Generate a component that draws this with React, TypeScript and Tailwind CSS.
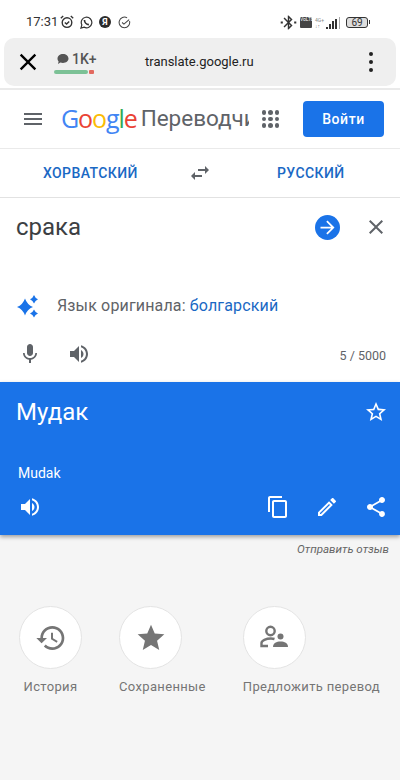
import React from 'react'

const Icon = ({ d, className }: { d: string; className: string }) => (
  <svg viewBox="0 0 24 24" className={className} fill="currentColor">
    <path d={d} />
  </svg>
)

const paths = {
  menu: 'M3 18h18v-2H3v2zm0-5h18v-2H3v2zm0-7v2h18V6H3z',
  swap: 'M6.99 11L3 15l3.99 4v-3H14v-2H6.99v-3zM21 9l-3.99-4v3H10v2h7.01v3L21 9z',
  arrow: 'M12 4l-1.41 1.41L16.17 11H4v2h12.17l-5.58 5.59L12 20l8-8z',
  close: 'M19 6.41L17.59 5 12 10.59 6.41 5 5 6.41 10.59 12 5 17.59 6.41 19 12 13.41 17.59 19 19 17.59 13.41 12z',
  mic: 'M12 14c1.66 0 2.99-1.34 2.99-3L15 5c0-1.66-1.34-3-3-3S9 3.34 9 5v6c0 1.66 1.34 3 3 3zm5.3-3c0 3-2.54 5.1-5.3 5.1S6.7 14 6.7 11H5c0 3.41 2.72 6.23 6 6.72V21h2v-3.28c3.28-.48 6-3.3 6-6.72h-1.7z',
  volume: 'M3 9v6h4l5 5V4L7 9H3zm13.5 3c0-1.77-1.02-3.29-2.5-4.03v8.05c1.48-.73 2.5-2.25 2.5-4.02zM14 3.23v2.06c2.89.86 5 3.54 5 6.71s-2.11 5.85-5 6.71v2.06c4.01-.91 7-4.49 7-8.77 0-4.28-2.99-7.86-7-8.77z',
  starBorder: 'M22 9.24l-7.19-.62L12 2 9.19 8.63 2 9.24l5.46 4.73L5.82 21 12 17.27 18.18 21l-1.63-7.03L22 9.24zM12 15.4l-3.76 2.27 1-4.28-3.32-2.88 4.38-.38L12 6.1l1.71 4.04 4.38.38-3.32 2.88 1 4.28L12 15.4z',
  star: 'M12 17.27L18.18 21l-1.64-7.03L22 9.24l-7.19-.61L12 2 9.19 8.63 2 9.24l5.46 4.73L5.82 21z',
  copy: 'M16 1H4c-1.1 0-2 .9-2 2v14h2V3h12V1zm3 4H8c-1.1 0-2 .9-2 2v14c0 1.1.9 2 2 2h11c1.1 0 2-.9 2-2V7c0-1.1-.9-2-2-2zm0 16H8V7h11v14z',
  edit: 'M14.06 9.02l.92.92L5.92 19H5v-.92l9.06-9.06M17.66 3c-.25 0-.51.1-.7.29l-1.83 1.83 3.75 3.75 1.83-1.83c.39-.39.39-1.02 0-1.41l-2.34-2.34c-.2-.2-.45-.29-.71-.29zm-3.6 3.19L3 17.25V21h3.75L17.81 9.94l-3.75-3.75z',
  share: 'M18 16.08c-.76 0-1.44.3-1.96.77L8.91 12.7c.05-.23.09-.46.09-.7s-.04-.47-.09-.7l7.05-4.11c.54.5 1.25.81 2.04.81 1.66 0 3-1.34 3-3s-1.34-3-3-3-3 1.34-3 3c0 .24.04.47.09.7L8.04 9.81C7.5 9.31 6.79 9 6 9c-1.66 0-3 1.34-3 3s1.34 3 3 3c.79 0 1.5-.31 2.04-.81l7.12 4.16c-.05.21-.08.43-.08.65 0 1.61 1.31 2.92 2.92 2.92 1.61 0 2.92-1.31 2.92-2.92s-1.31-2.92-2.92-2.92z',
  history: 'M13 3c-4.97 0-9 4.03-9 9H1l3.89 3.89.07.14L9 12H6c0-3.87 3.13-7 7-7s7 3.13 7 7-3.13 7-7 7c-1.93 0-3.68-.79-4.94-2.06l-1.42 1.42C8.27 19.99 10.51 21 13 21c4.97 0 9-4.03 9-9s-4.03-9-9-9zm-1 5v5l4.28 2.54.72-1.21-3.5-2.08V8H12z',
  bluetooth: 'M17.71 7.71L12 2h-1v7.59L6.41 5 5 6.41 10.59 12 5 17.59 6.41 19 11 14.41V22h1l5.71-5.71-4.3-4.29 4.3-4.29zM13 5.83l1.88 1.88L13 9.59V5.83zm1.88 10.46L13 18.17v-3.76l1.88 1.88zM1 10.5h3v3H1zM20 10.5h3v3h-3z',
}

function StatusBar() {
  return (
    <div className="h-[38px] bg-white flex items-end pb-[5px] pl-[26px] pr-[30px] text-[#333]">
      <span className="text-[13px] leading-[22px] w-[33px]">17:31</span>
      <div className="flex items-center gap-[6px] h-[22px] ml-[1px]">
        {/* alarm */}
        <svg viewBox="0 0 14 14" className="w-[14px] h-[14px]" fill="none" stroke="#333" strokeWidth="1.4">
          <circle cx="7" cy="7.6" r="4.8" />
          <path d="M4.8 7.4 L6.6 9 L9.2 6.4" />
          <path d="M0.8 3.2 L3.2 1 M13.2 3.2 L10.8 1" />
        </svg>
        {/* whatsapp */}
        <svg viewBox="0 0 14 14" className="w-[13px] h-[13px]" fill="none" stroke="#333" strokeWidth="1.3">
          <path d="M1 13 L2 9.6 A5.7 5.7 0 1 1 4.4 12 Z" />
          <path d="M4.8 4.4 C4.8 7 7 9.2 9.6 9.2" strokeWidth="1.8" />
        </svg>
        {/* yandex */}
        <span className="w-[12px] h-[12px] rounded-full bg-[#2b2b2b] text-white text-[9px] leading-[12px] text-center font-bold">Я</span>
        {/* check */}
        <svg viewBox="0 0 14 14" className="w-[13px] h-[13px] ml-[1px]" fill="none" stroke="#444" strokeWidth="1.1">
          <path d="M12.4 5.4 A5.7 5.7 0 1 1 9.8 2" />
          <path d="M4.4 7 L6.4 8.8 L12 3.8" />
        </svg>
      </div>
      <div className="ml-auto flex items-center h-[22px]">
        <Icon d={paths.bluetooth} className="w-[17px] h-[17px] text-[#333]" />
        <span className="ml-[3px] w-[12px] h-[11px] rounded-[1px] bg-[#444] text-white text-[5px] leading-[5.5px] text-center">VoLTE</span>
        {/* signal */}
        <div className="ml-[3px] flex items-end gap-[1px] h-[13px]">
          <div className="flex flex-col text-[5px] leading-[6px] text-[#888] mr-[1px]">
            <span>4G+</span>
            <span>↓↑</span>
          </div>
          <div className="w-[2px] h-[2px] bg-[#333]" />
          <div className="w-[2px] h-[5px] bg-[#333]" />
          <div className="w-[2px] h-[8px] bg-[#333]" />
          <div className="w-[2px] h-[10px] bg-[#333]" />
          <div className="w-[1px] h-[12px] ml-[1px] bg-[#aaa]" />
        </div>
        <div className="ml-[6px] flex items-center">
          <div className="w-[22px] h-[11px] border border-[#333] rounded-[3px] text-[10px] leading-[9px] text-center text-[#333] bg-[#ddd]">69</div>
          <div className="w-[1px] h-[4px] ml-[1px] bg-[#333]" />
        </div>
      </div>
    </div>
  )
}

function BrowserBar() {
  return (
    <div className="bg-white px-[4px] pb-[2px]">
      <div className="h-[48px] rounded-[10px] bg-[#efefef] flex items-center">
        <Icon d={paths.close} className="w-[28px] h-[28px] ml-[10px] text-black" />
        <div className="ml-[12px] w-[44px] flex flex-col items-start">
          <div className="flex items-center h-[18px] ml-[3px]">
            <svg viewBox="0 0 12 12" className="w-[12px] h-[12px]" fill="#555">
              <path d="M6 1 C9 1 11.5 3 11.5 5.6 C11.5 8.2 9 10 6 10 C5 10 4.2 9.9 3.4 9.6 L1 11 L1.6 8.4 C0.8 7.6 0.5 6.6 0.5 5.6 C0.5 3 3 1 6 1 Z" />
            </svg>
            <span className="ml-[3px] text-[14px] leading-[18px] text-[#555] font-medium whitespace-nowrap">1K+</span>
          </div>
          <div className="flex items-center gap-[1px] mt-[2px]">
            <div className="w-[34px] h-[4px] rounded-full bg-[#7cc196]" />
            <div className="w-[5px] h-[4px] rounded-[1px] bg-[#e2695f]" />
          </div>
        </div>
        <span className="ml-[47px] text-[13px] text-[#222]">translate.google.ru</span>
        <div className="ml-auto mr-[23px] flex flex-col gap-[4px]">
          <div className="w-[4px] h-[4px] rounded-full bg-[#222]" />
          <div className="w-[4px] h-[4px] rounded-full bg-[#222]" />
          <div className="w-[4px] h-[4px] rounded-full bg-[#222]" />
        </div>
      </div>
    </div>
  )
}

function Header() {
  return (
    <div className="h-[61px] bg-white border-t-2 border-[#eaeaea] border-b flex items-center">
      <Icon d={paths.menu} className="w-[24px] h-[24px] ml-[21px] text-[#5f6368]" />
      <div className="ml-[16px] w-[188px] overflow-hidden whitespace-nowrap flex items-center text-[25px] font-[Open_Sans]">
        <span className="tracking-[-1.1px]">
          <span className="text-[#4285f4]">G</span>
          <span className="text-[#ea4335]">o</span>
          <span className="text-[#fbbc05]">o</span>
          <span className="text-[#4285f4]">g</span>
          <span className="text-[#34a853]">l</span>
          <span className="text-[#ea4335]">e</span>
        </span>
        <span className="ml-[4px] text-[#5f6368] text-[22.5px] font-[Roboto]">Переводчик</span>
      </div>
      <div className="ml-[13px] grid grid-cols-3 gap-[2px] w-[17px]">
        {Array.from({ length: 9 }).map((_, i) => (
          <div key={i} className="w-[4.4px] h-[4.4px] rounded-full bg-[#5f6368]" />
        ))}
      </div>
      <button className="ml-[24px] w-[81px] h-[36px] rounded-[4px] bg-[#1a73e8] text-white text-[14px] font-medium tracking-[0.6px]">
        Войти
      </button>
    </div>
  )
}

function LangRow() {
  return (
    <div className="h-[49px] bg-white border-b border-[#e2e2e2] flex items-center text-[14px] font-medium text-[#1a68c4] tracking-[0.4px]">
      <span className="ml-[43px] w-[145px]">ХОРВАТСКИЙ</span>
      <Icon d={paths.swap} className="w-[24px] h-[24px] text-[#5f6368]" />
      <span className="ml-[65px]">РУССКИЙ</span>
    </div>
  )
}

function InputCard() {
  return (
    <div className="h-[184px] bg-white flex flex-col">
      <div className="h-[58px] flex items-center">
        <span className="ml-[16px] text-[24px] text-[#3c4043]">срака</span>
        <div className="ml-auto w-[25px] h-[25px] rounded-full bg-[#1a73e8] flex items-center justify-center">
          <Icon d={paths.arrow} className="w-[21px] h-[21px] text-white" />
        </div>
        <Icon d={paths.close} className="w-[24px] h-[24px] ml-[24px] mr-[12px] text-[#5f6368]" />
      </div>
      <div className="mt-[30px] h-[40px] flex items-center">
        <svg viewBox="0 0 24 24" className="w-[24px] h-[24px] ml-[16px]" fill="#1a73e8">
          <path d="M9 4.5 Q11.2 10.8 17 13 Q11.2 15.2 9 21.5 Q6.8 15.2 1 13 Q6.8 10.8 9 4.5 Z" />
          <path d="M18 1 Q19.2 4.2 22 5.3 Q19.2 6.4 18 9.6 Q16.8 6.4 14 5.3 Q16.8 4.2 18 1 Z" />
          <path d="M18 15.5 Q19.2 18.4 22 19.5 Q19.2 20.6 18 23.5 Q16.8 20.6 14 19.5 Q16.8 18.4 18 15.5 Z" />
        </svg>
        <span className="ml-[17px] text-[16px] text-[#5f6368] tracking-[0.15px]">
          Язык оригинала: <span className="text-[#1a68c4]">болгарский</span>
        </span>
      </div>
      <div className="mt-[8px] h-[40px] flex items-center">
        <Icon d={paths.mic} className="w-[24px] h-[24px] ml-[18px] text-[#5f6368]" />
        <Icon d={paths.volume} className="w-[24px] h-[24px] ml-[25px] text-[#5f6368]" />
        <span className="ml-auto mr-[14px] mt-[4px] text-[12.5px] text-[#5f6368]">5 / 5000</span>
      </div>
    </div>
  )
}

function ResultCard() {
  return (
    <div className="h-[153px] bg-[#1a73e8] text-white flex flex-col shadow-[0_2px_4px_rgba(0,0,0,0.35)]">
      <div className="h-[60px] flex items-center">
        <span className="ml-[16px] text-[24px]">Мудак</span>
        <Icon d={paths.starBorder} className="w-[24px] h-[24px] ml-auto mr-[12px]" />
      </div>
      <span className="ml-[18px] mt-[21px] text-[14px] leading-[20px]">Mudak</span>
      <div className="mt-[4px] h-[40px] flex items-center">
        <Icon d={paths.volume} className="w-[24px] h-[24px] ml-[18px]" />
        <Icon d={paths.copy} className="w-[24px] h-[24px] ml-auto" />
        <Icon d={paths.edit} className="w-[24px] h-[24px] ml-[25px]" />
        <Icon d={paths.share} className="w-[24px] h-[24px] ml-[25px] mr-[12px]" />
      </div>
    </div>
  )
}

function Shortcut({ label, icon, first }: { label: string; icon: React.ReactNode; first?: boolean }) {
  return (
    <div className={first ? 'flex flex-col items-center w-[63px]' : 'flex flex-col items-start'}>
      <div className="w-[63px] h-[63px] rounded-full bg-white border border-[#e4e4e4] flex items-center justify-center">
        {icon}
      </div>
      <span className="mt-[8px] text-[13px] leading-[20px] text-[#757575] tracking-[0.35px] whitespace-nowrap">{label}</span>
    </div>
  )
}

export default function App() {
  return (
    <div className="w-[400px] h-[780px] overflow-hidden bg-[#f5f5f5] font-[Roboto,sans-serif]">
      <StatusBar />
      <BrowserBar />
      <Header />
      <LangRow />
      <InputCard />
      <ResultCard />
      <div className="h-[30px] flex items-center justify-end pr-[11px] text-[11.6px] italic text-[#666]">
        Отправить отзыв
      </div>
      <div className="mt-[41px] flex pl-[19px]">
        <Shortcut first label="История" icon={<Icon d={paths.history} className="w-[32px] h-[32px] text-[#757575]" />} />
        <div className="ml-[37px]">
          <Shortcut label="Сохраненные" icon={<Icon d={paths.star} className="w-[32px] h-[32px] text-[#757575]" />} />
        </div>
        <div className="ml-[37px]">
          <Shortcut
            label="Предложить перевод"
            icon={
              <svg viewBox="0 0 32 32" className="w-[32px] h-[32px]" fill="none" stroke="#757575" strokeWidth="2.4">
                <circle cx="12.5" cy="9" r="4.2" />
                <path d="M10 24 H3.5 V21 C3.5 18.5 8 16.5 13 16.5 C14.5 16.5 15.5 16.7 16.5 17" />
                <circle cx="22.5" cy="14.5" r="3" fill="#757575" stroke="none" />
                <path d="M15 25 C15 21 18.5 19.5 22.5 19.5 C26.5 19.5 30 21 30 25 Z" fill="#757575" stroke="none" />
              </svg>
            }
          />
        </div>
      </div>
    </div>
  )
}
